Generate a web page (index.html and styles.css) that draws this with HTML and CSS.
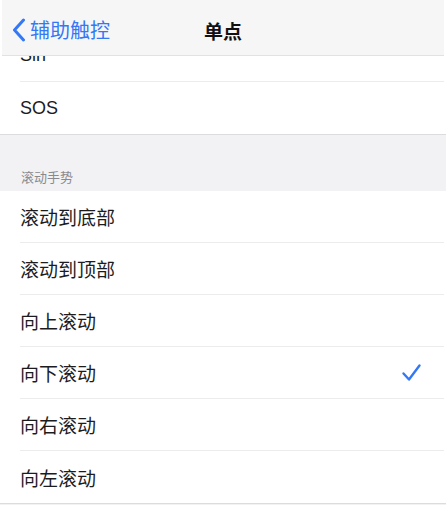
FILE: index.html
```html
<!DOCTYPE html>
<html lang="zh">
<head>
<meta charset="utf-8">
<link rel="stylesheet" href="styles.css">
</head>
<body>
<div class="screen">
  <div class="navbar">
    <div class="back">
      <svg class="chev" width="14" height="24" viewBox="0 0 14 24"><path d="M11.5 2 L2.5 12 L11.5 22" fill="none" stroke="#3478f6" stroke-width="3" stroke-linecap="round" stroke-linejoin="round"/></svg>
      <span class="back-text">辅助触控</span>
    </div>
    <div class="title">单点</div>
  </div>
  <div class="group top-group">
    <div class="row partial"><span class="label">Siri</span></div>
    <div class="row"><span class="label">SOS</span></div>
  </div>
  <div class="section-header">滚动手势</div>
  <div class="group">
    <div class="row"><span class="label">滚动到底部</span></div>
    <div class="row"><span class="label">滚动到顶部</span></div>
    <div class="row"><span class="label">向上滚动</span></div>
    <div class="row"><span class="label">向下滚动</span>
      <svg class="check" width="21" height="19" viewBox="0 0 21 19"><path d="M2.5 10.5 L8 16.5 L18.5 2.5" fill="none" stroke="#3478f6" stroke-width="2.4" stroke-linecap="round" stroke-linejoin="round"/></svg>
    </div>
    <div class="row"><span class="label">向右滚动</span></div>
    <div class="row"><span class="label">向左滚动</span></div>
  </div>
  <div class="footer"></div>
</div>
</body>
</html>
```
FILE: styles.css
```css
* { box-sizing: border-box; }
html, body { margin: 0; padding: 0; background: #ffffff; }
body {
  font-family: "Noto Sans CJK SC", "Liberation Sans", sans-serif;
  color: #111;
}
.screen {
  width: 446px;
  height: 505px;
  overflow: hidden;
  position: relative;
  padding: 0 2px;
  background: #fff;
}
.navbar {
  position: absolute;
  top: 0; left: 2px; right: 2px;
  height: 56px;
  background: #f6f6f7;
  border-bottom: 1px solid #e2e2e4;
  z-index: 2;
  display: flex;
  align-items: center;
  justify-content: center;
}
.back {
  position: absolute;
  left: 10px;
  top: 18px;
  display: flex;
  align-items: center;
  gap: 4px;
  color: #3478f6;
}
.chev { display: block; }
.back-text { font-size: 20px; line-height: 24px; }
.title { font-size: 19px; font-weight: 700; line-height: 24px; margin-top: 6px; color: #111; }
.top-group { margin-top: 30px; }
.group { background: #fff; }
.row {
  height: 52px;
  margin-left: 18px;
  padding-right: 22px;
  display: flex;
  align-items: center;
  justify-content: space-between;
  border-bottom: 1px solid #ececee;
}
.row:last-child { border-bottom: none; }
.label { font-size: 19px; color: #1c1c1e; }
.top-group .row .label { font-family: "Liberation Sans", "Noto Sans CJK SC", sans-serif; font-size: 18px; }
.section-header {
  background: #f2f2f4;
  height: 57px;
  border-top: 1px solid #dcdcde;
  padding: 32px 0 0 21px;
  font-size: 13px;
  color: #8a8a8e;
  margin: 0 -2px;
}
.check { display: block; }
.footer {
  height: 6px;
  background: #f2f2f4;
  border-top: 1px solid #dcdcde;
  margin: 0 -2px;
}
```
